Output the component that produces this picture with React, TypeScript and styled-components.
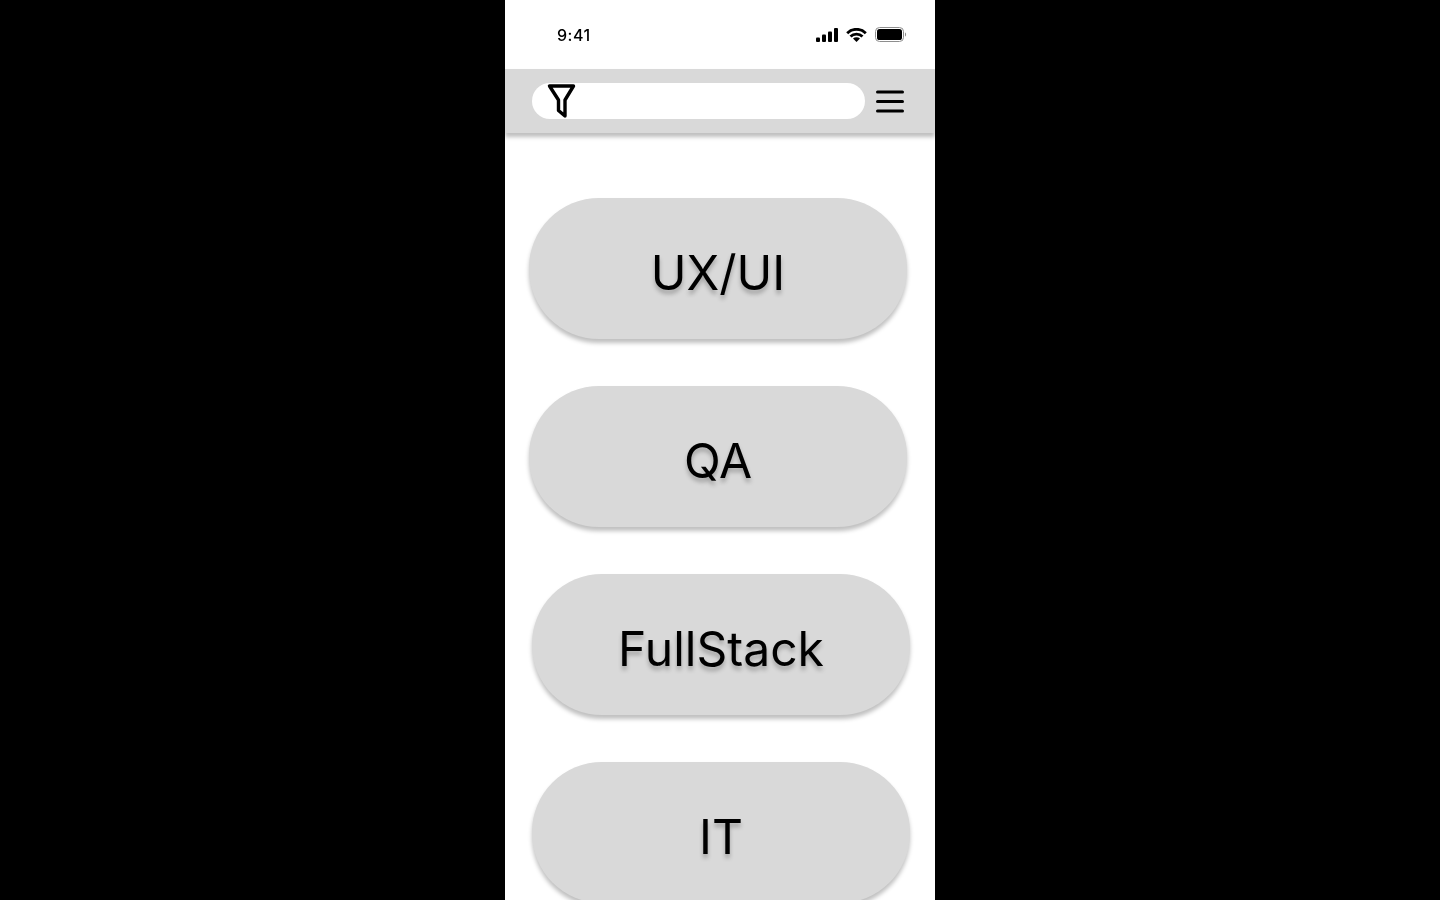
import styled, { createGlobalStyle } from "styled-components";

const Global = createGlobalStyle`
  html, body { margin: 0; height: 100%; background: #000; overflow: hidden; }
  body { font-family: Inter, "Liberation Sans", sans-serif; }
`;

const Page = styled.div`
  height: 900px;
  display: flex;
  justify-content: center;
  background: #000;
`;

const Phone = styled.div`
  width: 430px;
  height: 900px;
  background: #fff;
  overflow: hidden;
  flex-shrink: 0;
`;

const StatusBar = styled.div`
  height: 69px;
  box-sizing: border-box;
  padding: 0 28px 0 52px;
  display: flex;
  align-items: center;
  justify-content: space-between;
`;

const Clock = styled.span`
  font-size: 16px;
  font-weight: 500;
  color: #000;
  letter-spacing: 0.5px;
  will-change: transform;
`;

const StatusIcons = styled.div`
  display: flex;
  align-items: center;
  gap: 8px;
`;

const Header = styled.div`
  height: 64px;
  box-sizing: border-box;
  background: #d9d9d9;
  box-shadow: 0 4px 4px rgba(0, 0, 0, 0.25);
  padding: 0 31px 0 27px;
  display: flex;
  align-items: center;
  justify-content: space-between;
`;

const Search = styled.div`
  width: 333px;
  height: 36px;
  background: #fff;
  border-radius: 18px;
  position: relative;
`;

const FilterIcon = styled.svg`
  position: absolute;
  left: 15px;
  top: 0;
`;

const Pills = styled.div`
  display: flex;
  flex-direction: column;
  gap: 47px;
  padding-top: 65px;
`;

const Pill = styled.div<{ $left: number }>`
  flex-shrink: 0;
  width: 378px;
  height: 141px;
  margin-left: ${(p) => p.$left}px;
  background: #d9d9d9;
  border-radius: 70px;
  box-shadow: 0 4px 4px rgba(0, 0, 0, 0.25);
  display: flex;
  align-items: center;
  justify-content: center;
  padding-top: 8px;
  box-sizing: border-box;
  font-size: 48px;
  line-height: 58px;
  font-weight: 400;
  color: #000;
  text-shadow: 0 4px 4px rgba(0, 0, 0, 0.25);
  will-change: transform;
`;

const items = [
  { name: "UX/UI", left: 24 },
  { name: "QA", left: 24 },
  { name: "FullStack", left: 27 },
  { name: "IT", left: 27 },
];

export default function App() {
  return (
    <Page>
      <Global />
      <Phone>
        <StatusBar>
          <Clock>9:41</Clock>
          <StatusIcons>
            <svg width="22" height="14" viewBox="0 0 22 14" fill="#000">
              <rect x="0" y="9.5" width="4" height="4.5" rx="1" />
              <rect x="6" y="6.5" width="4" height="7.5" rx="1" />
              <rect x="12" y="3.5" width="4" height="10.5" rx="1" />
              <rect x="18" y="0" width="4" height="14" rx="1" />
            </svg>
            <svg width="21" height="14" viewBox="0 0 21 14" fill="none" stroke="#000" strokeWidth="2.8">
              <path d="M1.2 5.2 A13 13 0 0 1 19.8 5.2" />
              <path d="M4.5 8.6 A8.5 8.5 0 0 1 16.5 8.6" />
              <path d="M10.5 14 L7 10.6 A5 5 0 0 1 14 10.6 Z" fill="#000" stroke="none" />
            </svg>
            <svg width="32" height="15" viewBox="0 0 32 15" fill="none">
              <rect x="0.5" y="0.5" width="28" height="14" rx="4" stroke="#8e8e8e" />
              <rect x="2" y="2" width="25" height="11" rx="2.6" fill="#000" />
              <path d="M30 5.5 C31.4 5.9 31.4 9.1 30 9.5 Z" fill="#8e8e8e" />
            </svg>
          </StatusIcons>
        </StatusBar>
        <Header>
          <Search>
            <FilterIcon width="30" height="36" viewBox="0 0 30 36" fill="none" stroke="#000" strokeWidth="3.4" strokeLinejoin="round" strokeLinecap="round">
              <path d="M2.5 3 H26.5 L18 17 V33 L11.5 27.5 V17 Z" />
            </FilterIcon>
          </Search>
          <svg width="28" height="24" viewBox="0 0 28 24" stroke="#000" strokeWidth="3" strokeLinecap="round">
            <path d="M1.5 3 H26.5" />
            <path d="M1.5 12.5 H26.5" />
            <path d="M1.5 22 H26.5" />
          </svg>
        </Header>
        <Pills>
          {items.map((item) => (
            <Pill key={item.name} $left={item.left}>
              {item.name}
            </Pill>
          ))}
        </Pills>
      </Phone>
    </Page>
  );
}
